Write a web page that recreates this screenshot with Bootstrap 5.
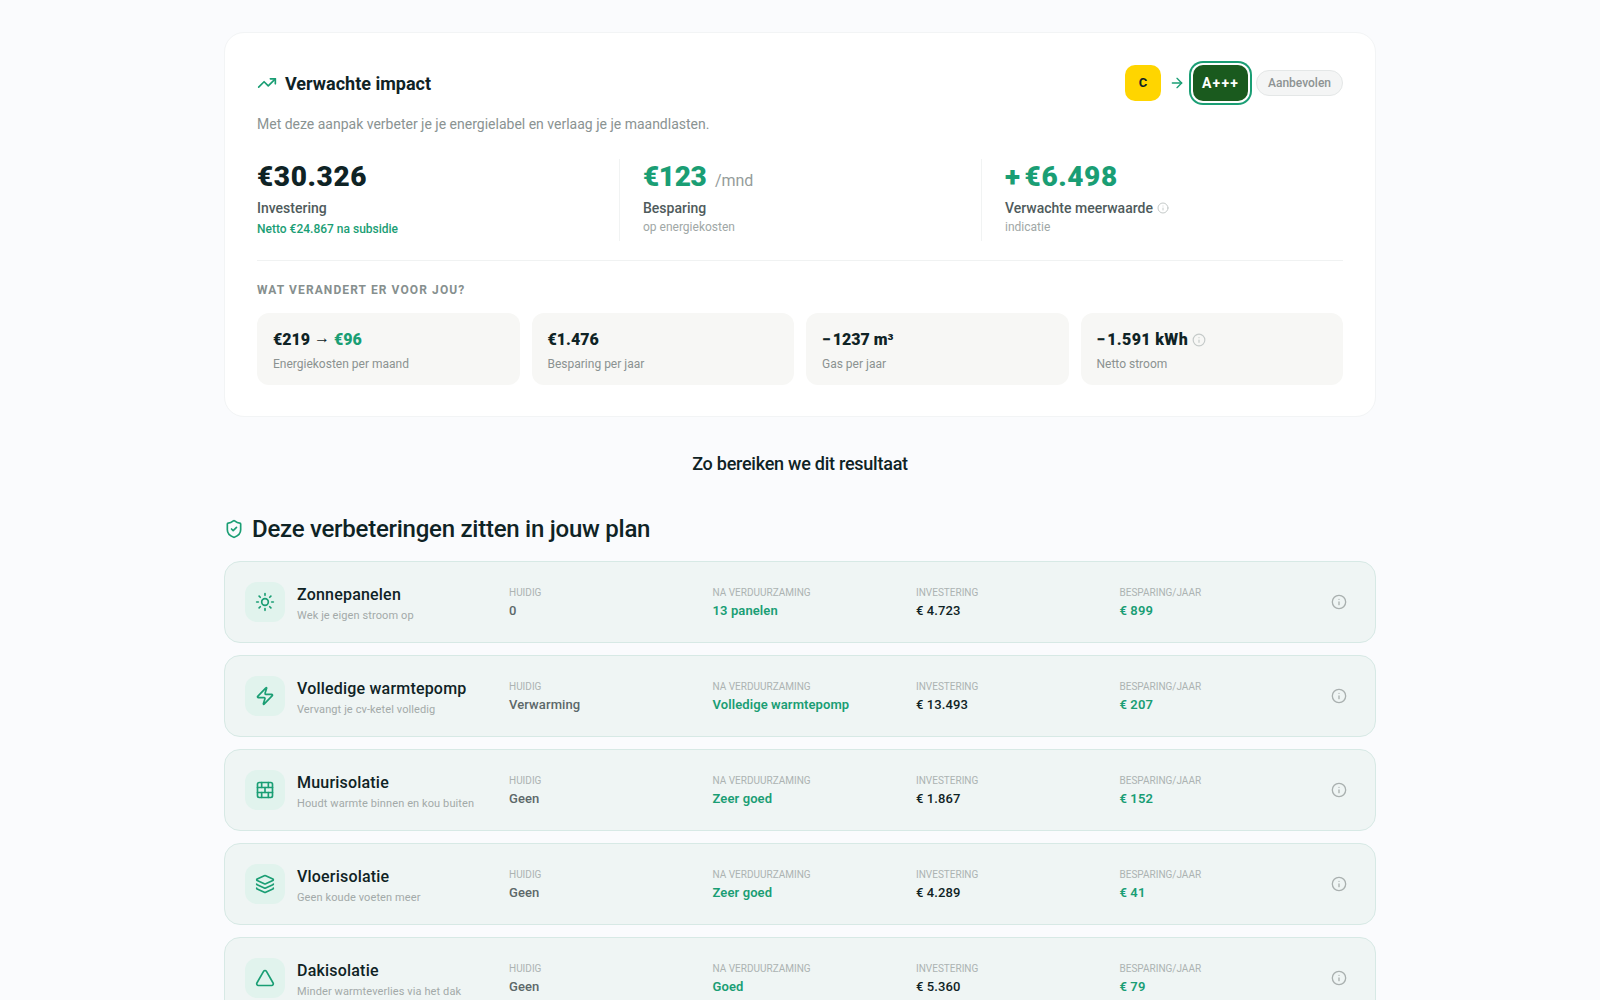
<!DOCTYPE html>
<html lang="nl">
<head>
    <meta charset="UTF-8">
    <meta name="viewport" content="width=device-width, initial-scale=1.0">
    <title>Verwachte impact</title>
    <link rel="stylesheet" href="https://cdn.jsdelivr.net/npm/bootstrap@5.3.0/dist/css/bootstrap.min.css">
    <style>
        body { background: #fafbfd; color: #0f2325; font-family: Roboto, "Noto Sans", sans-serif; }
        svg.ico { fill: none; stroke: currentColor; stroke-width: 2; stroke-linecap: round; stroke-linejoin: round; flex: none; }
        .page-wrap { width: 1152px; margin: 0 auto; padding-top: 32px; }
        .green { color: #1a9e74; }

        .impact-card { background: #fff; border: 1px solid #f2f4f5; border-radius: 20px; padding: 32px; height: 385px; }
        .impact-title { font-size: 18px; font-weight: 700; line-height: 28px; margin: 0; padding-top: 2px; }
        .label-c, .label-a { height: 36px; border-radius: 10px; font-weight: 700; }
        .label-c { width: 36px; background: #ffd500; color: #0f2325; font-size: 13px; }
        .label-a { width: 55px; background: #1a5a1e; color: #fff; font-size: 14px; letter-spacing: 1.2px; box-shadow: 0 0 0 2px #fff, 0 0 0 4px #1a9e74; }
        .reco-chip { width: 87px; height: 26px; font-size: 12px; font-weight: 500; color: #8d9393; background: #f4f5f5; border: 1px solid #e4e7e7; border-radius: 13px; }
        .impact-sub { font-size: 14px; line-height: 20px; color: #8a9392; margin: 13px 0 0; }

        .metrics { display: grid; grid-template-columns: repeat(3, 1fr); margin-top: 25px; padding-bottom: 19px; border-bottom: 1px solid #f0f2f2; }
        .metric { height: 82px; }
        .metric + .metric { border-left: 1px solid #f1f3f3; padding-left: 23px; }
        .metric-val { font-size: 28px; font-weight: 900; line-height: 36px; letter-spacing: .6px; }
        .metric-val.tight { letter-spacing: -.4px; }
        .metric-val small { font-size: 16px; font-weight: 400; line-height: 1; letter-spacing: 0; color: #959c9b; margin-left: 2px; }
        .metric-lab { font-size: 14px; font-weight: 500; line-height: 20px; color: #4f5b5c; margin-top: 3px; }
        .metric-note { font-size: 12px; line-height: 16px; color: #a0a7a6; margin-top: 1px; }
        .metric-note.green { font-weight: 500; color: #1a9e74; margin-top: 3px; }
        .info-small { color: #c5cac9; }

        .change-head { font-size: 12px; font-weight: 700; letter-spacing: 1.1px; line-height: 16px; color: #868f8e; margin: 21px 0 15px; }
        .tiles { display: grid; grid-template-columns: repeat(4, 1fr); gap: 12px; }
        .tile { height: 72px; background: #f7f7f5; border-radius: 12px; padding: 15px 16px; }
        .tile-val { font-size: 16px; font-weight: 900; line-height: 24px; }
        .tile-arrow { font-weight: 400; line-height: 0; vertical-align: 2px; }
        .tile-minus { letter-spacing: 2px; }
        .tile-wide { letter-spacing: .35px; }
        .tile-lab { font-size: 12px; line-height: 16px; color: #8b9291; margin-top: 4px; }

        .result-head { font-size: 18px; font-weight: 500; line-height: 28px; letter-spacing: -.25px; text-align: center; margin: 33px 0 0; }
        .plan-head { font-size: 24px; font-weight: 500; line-height: 32px; letter-spacing: -.25px; margin: 35px 0 16px; }
        .plan-row { display: grid; grid-template-columns: 40px 200px repeat(4, 1fr) 32px; column-gap: 12px; align-items: center; height: 82px; padding: 0 20px; margin-bottom: 12px; background: #eff5f4; border: 1px solid #d7e9e5; border-radius: 16px; }
        .plan-icon { width: 40px; height: 40px; background: #e1f3ed; border-radius: 12px; color: #1a9e74; }
        .plan-name { font-size: 16px; font-weight: 500; line-height: 24px; letter-spacing: .2px; padding-top: 2px; }
        .plan-desc { font-size: 11px; line-height: 16px; letter-spacing: .1px; color: #a3aaa9; white-space: nowrap; margin-top: 1px; }
        .col-lab { font-size: 10px; line-height: 15px; color: #acb3b2; text-transform: uppercase; padding-top: 2px; }
        .col-val { font-size: 13px; font-weight: 500; line-height: 20px; letter-spacing: .1px; margin-top: 1px; color: #5c6869; }
        .col-val.dark { color: #0f2325; }
        .col-val.green { color: #1a9e74; font-weight: 600; }
        .info-btn { width: 32px; height: 32px; background: none; border: 0; padding: 0; color: #a9b0af; }
    </style>
</head>
<body>
    <!-- icon set -->
    <svg class="d-none">
        <symbol id="i-info" viewBox="0 0 24 24"><circle cx="12" cy="12" r="10"/><path d="M12 16v-4"/><path d="M12 8h.01"/></symbol>
        <symbol id="i-sun" viewBox="0 0 24 24"><circle cx="12" cy="12" r="4"/><path d="M12 2v2"/><path d="M12 20v2"/><path d="m4.93 4.93 1.41 1.41"/><path d="m17.66 17.66 1.41 1.41"/><path d="M2 12h2"/><path d="M20 12h2"/><path d="m6.34 17.66-1.41 1.41"/><path d="m19.07 4.93-1.41 1.41"/></symbol>
        <symbol id="i-zap" viewBox="0 0 24 24"><path d="M4 14a1 1 0 0 1-.78-1.63l9.9-10.2a.5.5 0 0 1 .86.46l-1.92 6.02A1 1 0 0 0 13 10h7a1 1 0 0 1 .78 1.63l-9.9 10.2a.5.5 0 0 1-.86-.46l1.92-6.02A1 1 0 0 0 11 14z"/></symbol>
        <symbol id="i-brick" viewBox="0 0 24 24"><rect x="3" y="3" width="18" height="18" rx="2"/><path d="M12 9v6"/><path d="M16 15v6"/><path d="M16 3v6"/><path d="M3 15h18"/><path d="M3 9h18"/><path d="M8 15v6"/><path d="M8 3v6"/></symbol>
        <symbol id="i-layers" viewBox="0 0 24 24"><path d="M12.83 2.18a2 2 0 0 0-1.66 0L2.6 6.08a1 1 0 0 0 0 1.83l8.58 3.91a2 2 0 0 0 1.66 0l8.58-3.9a1 1 0 0 0 0-1.83z"/><path d="M2 12a1 1 0 0 0 .58.91l8.6 3.91a2 2 0 0 0 1.65 0l8.58-3.9A1 1 0 0 0 22 12"/><path d="M2 17a1 1 0 0 0 .58.91l8.6 3.91a2 2 0 0 0 1.65 0l8.58-3.9A1 1 0 0 0 22 17"/></symbol>
        <symbol id="i-triangle" viewBox="0 0 24 24"><path d="M13.73 4a2 2 0 0 0-3.46 0l-8 14A2 2 0 0 0 4 21h16a2 2 0 0 0 1.73-3Z"/></symbol>
    </svg>

    <div class="page-wrap">
        <!-- Impact card -->
        <div class="impact-card">
            <div class="d-flex justify-content-between align-items-center">
                <div class="d-flex align-items-center gap-2">
                    <svg class="ico green" width="20" height="20" viewBox="0 0 24 24"><polyline points="22 7 13.5 15.5 8.5 10.5 2 17"/><polyline points="16 7 22 7 22 13"/></svg>
                    <h2 class="impact-title">Verwachte impact</h2>
                </div>
                <div class="d-flex align-items-center gap-2">
                    <span class="label-c d-flex align-items-center justify-content-center">C</span>
                    <svg class="ico green" width="16" height="16" viewBox="0 0 24 24"><path d="M5 12h14"/><path d="m12 5 7 7-7 7"/></svg>
                    <span class="label-a d-flex align-items-center justify-content-center">A+++</span>
                    <span class="reco-chip d-flex align-items-center justify-content-center">Aanbevolen</span>
                </div>
            </div>
            <p class="impact-sub">Met deze aanpak verbeter je je energielabel en verlaag je je maandlasten.</p>

            <div class="metrics">
                <div class="metric">
                    <div class="metric-val">€30.326</div>
                    <div class="metric-lab">Investering</div>
                    <div class="metric-note green">Netto €24.867 na subsidie</div>
                </div>
                <div class="metric">
                    <div class="metric-val tight green">€123 <small>/mnd</small></div>
                    <div class="metric-lab">Besparing</div>
                    <div class="metric-note">op energiekosten</div>
                </div>
                <div class="metric">
                    <div class="metric-val green"><span class="me-1">+</span>€6.498</div>
                    <div class="metric-lab d-flex align-items-center gap-1">Verwachte meerwaarde <svg class="ico info-small" width="12" height="12"><use href="#i-info"/></svg></div>
                    <div class="metric-note">indicatie</div>
                </div>
            </div>

            <div class="change-head">WAT VERANDERT ER VOOR JOU?</div>
            <div class="tiles">
                <div class="tile">
                    <div class="tile-val">€219 <span class="tile-arrow">→</span> <span class="green">€96</span></div>
                    <div class="tile-lab">Energiekosten per maand</div>
                </div>
                <div class="tile">
                    <div class="tile-val">€1.476</div>
                    <div class="tile-lab">Besparing per jaar</div>
                </div>
                <div class="tile">
                    <div class="tile-val"><span class="tile-minus">−</span>1237 m³</div>
                    <div class="tile-lab">Gas per jaar</div>
                </div>
                <div class="tile">
                    <div class="tile-val d-flex align-items-center gap-1"><span class="tile-wide"><span class="tile-minus">−</span>1.591 kWh</span> <svg class="ico info-small" width="14" height="14"><use href="#i-info"/></svg></div>
                    <div class="tile-lab">Netto stroom</div>
                </div>
            </div>
        </div>

        <h3 class="result-head">Zo bereiken we dit resultaat</h3>

        <h2 class="plan-head d-flex align-items-center gap-2">
            <svg class="ico green" width="20" height="20" viewBox="0 0 24 24"><path d="M20 13c0 5-3.5 7.5-7.66 8.95a1 1 0 0 1-.67-.01C7.5 20.5 4 18 4 13V6a1 1 0 0 1 1-1c2 0 4.5-1.2 6.24-2.72a1.17 1.17 0 0 1 1.52 0C14.51 3.81 17 5 19 5a1 1 0 0 1 1 1z"/><path d="m9 12 2 2 4-4"/></svg>
            Deze verbeteringen zitten in jouw plan
        </h2>

        <!-- Plan rows -->
        <div id="planRows"></div>
    </div>

    <script>
        const rows = [
            ["i-sun", "Zonnepanelen", "Wek je eigen stroom op", "0", "13 panelen", "€ 4.723", "€ 899"],
            ["i-zap", "Volledige warmtepomp", "Vervangt je cv-ketel volledig", "Verwarming", "Volledige warmtepomp", "€ 13.493", "€ 207"],
            ["i-brick", "Muurisolatie", "Houdt warmte binnen en kou buiten", "Geen", "Zeer goed", "€ 1.867", "€ 152"],
            ["i-layers", "Vloerisolatie", "Geen koude voeten meer", "Geen", "Zeer goed", "€ 4.289", "€ 41"],
            ["i-triangle", "Dakisolatie", "Minder warmteverlies via het dak", "Geen", "Goed", "€ 5.360", "€ 79"]
        ];

        document.getElementById("planRows").innerHTML = rows.map(r => `
            <div class="plan-row">
                <div class="plan-icon d-flex align-items-center justify-content-center"><svg class="ico" width="20" height="20"><use href="#${r[0]}"/></svg></div>
                <div><div class="plan-name">${r[1]}</div><div class="plan-desc">${r[2]}</div></div>
                <div><div class="col-lab">Huidig</div><div class="col-val">${r[3]}</div></div>
                <div><div class="col-lab">Na verduurzaming</div><div class="col-val green">${r[4]}</div></div>
                <div><div class="col-lab">Investering</div><div class="col-val dark">${r[5]}</div></div>
                <div><div class="col-lab">Besparing/jaar</div><div class="col-val green">${r[6]}</div></div>
                <button class="info-btn d-flex align-items-center justify-content-center"><svg class="ico" width="16" height="16"><use href="#i-info"/></svg></button>
            </div>`).join("");
    </script>
    <script src="https://cdn.jsdelivr.net/npm/bootstrap@5.3.0/dist/js/bootstrap.bundle.min.js"></script>
</body>
</html>
